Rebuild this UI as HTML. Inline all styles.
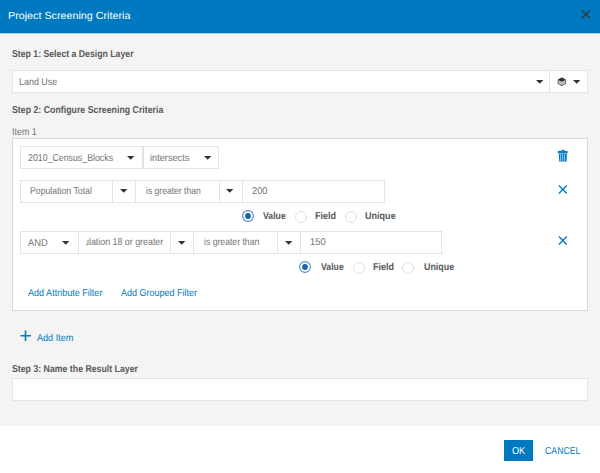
<!DOCTYPE html>
<html><head><meta charset="utf-8">
<style>
*{box-sizing:border-box;margin:0;padding:0}
html,body{width:600px;height:473px;overflow:hidden;background:#fff;font-family:"Liberation Sans",sans-serif;text-rendering:geometricPrecision}
.a{position:absolute}
.t{position:absolute;white-space:nowrap;line-height:1;transform-origin:0 0}
.box{position:absolute;background:#fff;border:1px solid #e3e3e3}
.dv{position:absolute;top:0;bottom:0;width:1px;background:#e2e2e2}
</style></head>
<body>
<div class="a" style="left:0;top:0;width:600px;height:33px;background:#0079c1"></div>
<div class="t" style="left:7.72px;top:12.00px;font-size:10.3px;color:#fff;transform:scaleX(1.0433)">Project Screening Criteria</div>
<svg class="a" style="left:580px;top:9px" width="12" height="11" viewBox="0 0 12 11"><path d="M1.8 1.2 L10 9.3 M10 1.2 L1.8 9.3" stroke="#2d3a45" stroke-width="1.4" fill="none"/></svg>
<div class="a" style="left:0;top:33px;width:600px;height:392.5px;background:#f4f4f4"></div>
<div class="a" style="left:0;top:33px;width:600px;height:1px;background:#a6cbe4"></div>
<div class="a" style="left:0;top:34px;width:600px;height:1px;background:#fdfdfd"></div>
<div class="t" style="left:11.98px;top:50.00px;font-size:10px;color:#595959;font-weight:bold;transform:scaleX(0.8711)">Step 1: Select a Design Layer</div>
<div class="box" style="left:12px;top:70px;width:538px;height:23px;border-color:#e3e3e3;"></div>
<div class="t" style="left:19.35px;top:78.00px;font-size:10px;color:#727272;transform:scaleX(0.8929)">Land Use</div>
<svg class="a" style="left:534.6px;top:78.8px" width="9.4" height="5.8" viewBox="0 0 9.4 5.8"><path d="M1 1H8.4L4.7 4.8z" fill="#333"/></svg>
<div class="box" style="left:549px;top:70px;width:39px;height:23px;border-color:#e3e3e3;"></div>
<svg class="a" style="left:556.9px;top:77.1px" width="10" height="10" viewBox="0 0 11 11"><path d="M5.3 0.9L9.4 3.1v4.4L5.3 9.6L1.2 7.5V3.1z" fill="#a8a8a8" stroke="#505050" stroke-width="0.9"/><path d="M5.3 0.7L9.6 3L5.3 5.2L1 3z" fill="#303030"/><path d="M2 4.6L8.6 8M8.6 4.6L2 8" stroke="#dedede" stroke-width="0.8"/></svg>
<svg class="a" style="left:571.8px;top:78.5px" width="9.4" height="5.8" viewBox="0 0 9.4 5.8"><path d="M1 1H8.4L4.7 4.8z" fill="#333"/></svg>
<div class="t" style="left:11.98px;top:106.00px;font-size:10px;color:#595959;font-weight:bold;transform:scaleX(0.8784)">Step 2: Configure Screening Criteria</div>
<div class="t" style="left:11.83px;top:128.00px;font-size:10px;color:#727272;transform:scaleX(0.8897)">Item 1</div>
<div class="box" style="left:12px;top:138px;width:576px;height:173px;border-color:#d9d9d9;"></div>
<div class="box" style="left:20px;top:146px;width:123px;height:23px;border-color:#e3e3e3;"></div>
<div class="t" style="left:27.86px;top:154.00px;font-size:10px;color:#727272;transform:scaleX(0.8792)">2010_Census_Blocks</div>
<svg class="a" style="left:126.3px;top:154.7px" width="9.4" height="5.8" viewBox="0 0 9.4 5.8"><path d="M1 1H8.4L4.7 4.8z" fill="#333"/></svg>
<div class="box" style="left:143px;top:146px;width:76px;height:23px;border-color:#e3e3e3;"></div>
<div class="t" style="left:150.24px;top:154.00px;font-size:10px;color:#727272;transform:scaleX(0.9190)">intersects</div>
<svg class="a" style="left:202.5px;top:154.7px" width="9.4" height="5.8" viewBox="0 0 9.4 5.8"><path d="M1 1H8.4L4.7 4.8z" fill="#333"/></svg>
<svg class="a" style="left:554px;top:147px" width="18" height="18" viewBox="0 0 18 18"><rect x="7" y="2.9" width="3.8" height="1.2" fill="#2a8fd0"/><rect x="3.8" y="3.9" width="9.9" height="2.3" fill="#0a7fc6"/><path d="M4.8 6.6H13L12.6 14.6H5.2z" fill="#0a7cc4"/><path d="M6.5 7.3v6.6M8.5 7.3v6.6M10.5 7.3v6.6" stroke="#8ccdf0" stroke-width="0.9"/></svg>
<div class="box" style="left:20px;top:180px;width:116px;height:23px;border-color:#e3e3e3;"><div class="dv" style="left:90.6px"></div></div>
<div class="t" style="left:29.56px;top:187.00px;font-size:10px;color:#727272;transform:scaleX(0.8714)">Population Total</div>
<svg class="a" style="left:118.8px;top:188.1px" width="9.4" height="5.8" viewBox="0 0 9.4 5.8"><path d="M1 1H8.4L4.7 4.8z" fill="#333"/></svg>
<div class="box" style="left:135px;top:180px;width:107.5px;height:23px;border-color:#e3e3e3;"><div class="dv" style="left:82.6px"></div></div>
<div class="t" style="left:145.97px;top:187.00px;font-size:10px;color:#727272;transform:scaleX(0.8556)">is greater than</div>
<svg class="a" style="left:225.3px;top:188.1px" width="9.4" height="5.8" viewBox="0 0 9.4 5.8"><path d="M1 1H8.4L4.7 4.8z" fill="#333"/></svg>
<div class="box" style="left:242px;top:180px;width:143px;height:23px;border-color:#e3e3e3;"></div>
<div class="t" style="left:251.74px;top:187.00px;font-size:10px;color:#727272;transform:scaleX(0.9250)">200</div>
<svg class="a" style="left:557.2px;top:184.1px" width="12" height="12" viewBox="0 0 12 12"><path d="M1.9 1.6 L9.7 9.4 M9.7 1.6 L1.9 9.4" stroke="#0079c1" stroke-width="1.35" fill="none"/></svg>
<svg class="a" style="left:241px;top:209.2px" width="14" height="14" viewBox="0 0 14 14"><circle cx="7" cy="7" r="5.4" fill="#fff" stroke="#4b90cb" stroke-width="1.1"/><circle cx="7" cy="7" r="2.9" fill="#1966aa"/></svg>
<div class="t" style="left:263.30px;top:212.00px;font-size:10px;color:#595959;font-weight:bold;transform:scaleX(0.8731)">Value</div>
<svg class="a" style="left:293.8px;top:209.5px" width="14" height="14" viewBox="0 0 14 14"><circle cx="7" cy="7" r="5.5" fill="#fff" stroke="#e0e0e0" stroke-width="1"/></svg>
<div class="t" style="left:315.45px;top:212.00px;font-size:10px;color:#595959;font-weight:bold;transform:scaleX(0.9067)">Field</div>
<svg class="a" style="left:343.7px;top:209.5px" width="14" height="14" viewBox="0 0 14 14"><circle cx="7" cy="7" r="5.5" fill="#fff" stroke="#e0e0e0" stroke-width="1"/></svg>
<div class="t" style="left:365.45px;top:212.00px;font-size:10px;color:#595959;font-weight:bold;transform:scaleX(0.9053)">Unique</div>
<div class="box" style="left:20px;top:231px;width:59px;height:23px;border-color:#e3e3e3;"></div>
<div class="t" style="left:27.50px;top:239.00px;font-size:10px;color:#727272;transform:scaleX(0.9398)">AND</div>
<svg class="a" style="left:61.3px;top:239.5px" width="9.4" height="5.8" viewBox="0 0 9.4 5.8"><path d="M1 1H8.4L4.7 4.8z" fill="#333"/></svg>
<div class="box" style="left:78px;top:231px;width:116px;height:23px;border-color:#e3e3e3;"><div class="dv" style="left:91.2px"></div></div>
<div class="a" style="left:86px;top:231px;width:80px;height:22px;overflow:hidden"><div class="t" style="left:-2.44px;top:7.00px;font-size:10px;color:#727272;transform:scaleX(0.8854)">ulation 18 or greater</div>
</div>
<svg class="a" style="left:177px;top:239.5px" width="9.4" height="5.8" viewBox="0 0 9.4 5.8"><path d="M1 1H8.4L4.7 4.8z" fill="#333"/></svg>
<div class="box" style="left:193px;top:231px;width:108px;height:23px;border-color:#e3e3e3;"><div class="dv" style="left:82.5px"></div></div>
<div class="t" style="left:203.57px;top:238.00px;font-size:10px;color:#727272;transform:scaleX(0.8651)">is greater than</div>
<svg class="a" style="left:283.6px;top:239.5px" width="9.4" height="5.8" viewBox="0 0 9.4 5.8"><path d="M1 1H8.4L4.7 4.8z" fill="#333"/></svg>
<div class="box" style="left:300px;top:231px;width:142px;height:23px;border-color:#e3e3e3;"></div>
<div class="t" style="left:310.10px;top:238.00px;font-size:10px;color:#727272;transform:scaleX(0.9333)">150</div>
<svg class="a" style="left:557.3px;top:235.1px" width="12" height="12" viewBox="0 0 12 12"><path d="M1.9 1.6 L9.7 9.4 M9.7 1.6 L1.9 9.4" stroke="#0079c1" stroke-width="1.35" fill="none"/></svg>
<svg class="a" style="left:298.4px;top:260.2px" width="14" height="14" viewBox="0 0 14 14"><circle cx="7" cy="7" r="5.4" fill="#fff" stroke="#4b90cb" stroke-width="1.1"/><circle cx="7" cy="7" r="2.9" fill="#1966aa"/></svg>
<div class="t" style="left:320.90px;top:263.00px;font-size:10px;color:#595959;font-weight:bold;transform:scaleX(0.8731)">Value</div>
<svg class="a" style="left:351.9px;top:260.5px" width="14" height="14" viewBox="0 0 14 14"><circle cx="7" cy="7" r="5.5" fill="#fff" stroke="#e0e0e0" stroke-width="1"/></svg>
<div class="t" style="left:373.45px;top:263.00px;font-size:10px;color:#595959;font-weight:bold;transform:scaleX(0.9067)">Field</div>
<svg class="a" style="left:401.4px;top:260.5px" width="14" height="14" viewBox="0 0 14 14"><circle cx="7" cy="7" r="5.5" fill="#fff" stroke="#e0e0e0" stroke-width="1"/></svg>
<div class="t" style="left:423.95px;top:263.00px;font-size:10px;color:#595959;font-weight:bold;transform:scaleX(0.8902)">Unique</div>
<div class="t" style="left:28.00px;top:289.00px;font-size:10px;color:#0079c1;transform:scaleX(0.9046)">Add Attribute Filter</div>
<div class="t" style="left:121.00px;top:289.00px;font-size:10px;color:#0079c1;transform:scaleX(0.8994)">Add Grouped Filter</div>
<svg class="a" style="left:20px;top:329.5px" width="12" height="12" viewBox="0 0 12 12"><path d="M5.5 0.5v10.5M0.5 5.7h10.5" stroke="#0079c1" stroke-width="1.6" fill="none"/></svg>
<div class="t" style="left:37.20px;top:334.00px;font-size:10px;color:#0079c1;transform:scaleX(0.9063)">Add Item</div>
<div class="t" style="left:11.98px;top:365.00px;font-size:10px;color:#595959;font-weight:bold;transform:scaleX(0.8751)">Step 3: Name the Result Layer</div>
<div class="box" style="left:12px;top:378px;width:576px;height:23px;border-color:#e3e3e3;"></div>
<div class="a" style="left:504px;top:440.2px;width:28.5px;height:21.1px;background:#0079c1"></div>
<div class="t" style="left:511.77px;top:447.00px;font-size:10px;color:#fff;transform:scaleX(0.9143)">OK</div>
<div class="t" style="left:545.46px;top:447.00px;font-size:10px;color:#0079c1;transform:scaleX(0.8730)">CANCEL</div>
</body></html>
